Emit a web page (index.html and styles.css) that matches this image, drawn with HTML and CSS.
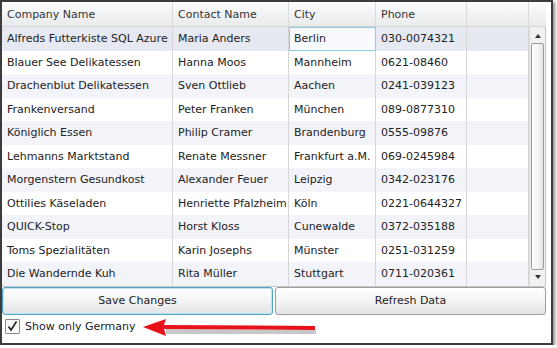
FILE: index.html
```html
<!DOCTYPE html>
<html>
<head>
<meta charset="utf-8">
<link rel="stylesheet" href="styles.css">
</head>
<body>
<div class="frame">
  <div class="grid">
    <div class="table">
      <div class="row head">
        <div class="cell">Company Name</div>
        <div class="cell">Contact Name</div>
        <div class="cell">City</div>
        <div class="cell">Phone</div>
        <div class="cell"></div>
      </div>
      <div class="row alt selected">
        <div class="cell">Alfreds Futterkiste SQL Azure</div>
        <div class="cell">Maria Anders</div>
        <div class="cell focus">Berlin</div>
        <div class="cell">030-0074321</div>
        <div class="cell"></div>
      </div>
      <div class="row">
        <div class="cell">Blauer See Delikatessen</div>
        <div class="cell">Hanna Moos</div>
        <div class="cell">Mannheim</div>
        <div class="cell">0621-08460</div>
        <div class="cell"></div>
      </div>
      <div class="row alt">
        <div class="cell">Drachenblut Delikatessen</div>
        <div class="cell">Sven Ottlieb</div>
        <div class="cell">Aachen</div>
        <div class="cell">0241-039123</div>
        <div class="cell"></div>
      </div>
      <div class="row">
        <div class="cell">Frankenversand</div>
        <div class="cell">Peter Franken</div>
        <div class="cell">München</div>
        <div class="cell">089-0877310</div>
        <div class="cell"></div>
      </div>
      <div class="row alt">
        <div class="cell">Königlich Essen</div>
        <div class="cell">Philip Cramer</div>
        <div class="cell">Brandenburg</div>
        <div class="cell">0555-09876</div>
        <div class="cell"></div>
      </div>
      <div class="row">
        <div class="cell">Lehmanns Marktstand</div>
        <div class="cell">Renate Messner</div>
        <div class="cell">Frankfurt a.M.</div>
        <div class="cell">069-0245984</div>
        <div class="cell"></div>
      </div>
      <div class="row alt">
        <div class="cell">Morgenstern Gesundkost</div>
        <div class="cell">Alexander Feuer</div>
        <div class="cell">Leipzig</div>
        <div class="cell">0342-023176</div>
        <div class="cell"></div>
      </div>
      <div class="row">
        <div class="cell">Ottilies Käseladen</div>
        <div class="cell">Henriette Pfalzheim</div>
        <div class="cell">Köln</div>
        <div class="cell">0221-0644327</div>
        <div class="cell"></div>
      </div>
      <div class="row alt">
        <div class="cell">QUICK-Stop</div>
        <div class="cell">Horst Kloss</div>
        <div class="cell">Cunewalde</div>
        <div class="cell">0372-035188</div>
        <div class="cell"></div>
      </div>
      <div class="row">
        <div class="cell">Toms Spezialitäten</div>
        <div class="cell">Karin Josephs</div>
        <div class="cell">Münster</div>
        <div class="cell">0251-031259</div>
        <div class="cell"></div>
      </div>
      <div class="row alt last">
        <div class="cell">Die Wandernde Kuh</div>
        <div class="cell">Rita Müller</div>
        <div class="cell">Stuttgart</div>
        <div class="cell">0711-020361</div>
        <div class="cell"></div>
      </div>
    </div>
    <div class="scroll">
      <div class="scroll-head"></div>
      <div class="scroll-track">
        <div class="arrow up"></div>
        <div class="thumb"></div>
        <div class="arrow down"></div>
      </div>
    </div>
  </div>
  <div class="buttons">
    <button class="btn focused">Save Changes</button>
    <button class="btn">Refresh Data</button>
  </div>
  <div class="check-row">
    <span class="checkbox">
      <svg width="13" height="13" viewBox="0 0 13 13"><path d="M2.5 6.5 L5 10 L10.5 1.5" fill="none" stroke="#222" stroke-width="1.6"/></svg>
    </span>
    <span class="check-label">Show only Germany</span>
    <svg class="red-arrow" width="180" height="24" viewBox="0 0 180 24">
      <g transform="translate(2,3)" opacity="0.3">
        <path d="M22 9 L172 10 L172 14 L22 14 Z" fill="#444"/>
      </g>
      <path d="M1 10 L24 2 L22 8 L173 9 L173 13 L22 12 L24 19 Z" fill="#e8121b"/>
    </svg>
  </div>
</div>
</body>
</html>
```
FILE: styles.css
```css
html, body {
  margin: 0;
  padding: 0;
  background: #ffffff;
}
body {
  font-family: "DejaVu Sans", Verdana, sans-serif;
  font-size: 11px;
  color: #222;
}
.frame {
  width: 549px;
  height: 341px;
  border: 2px solid #3c3c3c;
  background: #fff;
  box-shadow: 2px 2px 3px rgba(0,0,0,0.45);
}
.grid {
  display: flex;
  width: 544px;
  border-bottom: 1px solid #c8c8c8;
}
.table {
  width: 527px;
}
.row {
  display: grid;
  grid-template-columns: 171px 116px 87px 91px 62px;
  height: 23.5px;
  background: #fff;
}
.row.alt {
  background: #f2f4fa;
}
.row.selected {
  background: #e6e9f1;
}
.row.head {
  height: 25px;
  background: linear-gradient(#fdfdfd, #f1f2f4 55%, #e9eaec);
  border-bottom: 1px solid #d4d4d4;
  box-sizing: border-box;
}
.cell {
  display: flex;
  align-items: center;
  padding-left: 5px;
  border-right: 1px solid #d6d6d6;
  white-space: nowrap;
  overflow: hidden;
  box-sizing: border-box;
}
.head .cell {
  color: #333;
  border-right: 1px solid #dadada;
}
.cell.focus {
  border: 1px solid #8fcde3;
  background: #f7f9fc;
  padding-left: 4px;
}
.scroll {
  width: 17px;
  display: flex;
  flex-direction: column;
}
.scroll-head {
  height: 25px;
  background: linear-gradient(#fdfdfd, #f1f2f4 55%, #e9eaec);
  border-bottom: 1px solid #d4d4d4;
  box-sizing: border-box;
}
.scroll-track {
  flex: 1;
  display: flex;
  flex-direction: column;
  align-items: center;
  background: #f0f1f3;
  border-left: 1px solid #dcdcdc;
  border-right: 1px solid #c8c8c8;
  padding: 2px 0;
  box-sizing: border-box;
}
.arrow {
  width: 0;
  height: 0;
  border-left: 3px solid transparent;
  border-right: 3px solid transparent;
  margin: 5px 0;
}
.arrow.up {
  border-bottom: 4px solid #333;
}
.arrow.down {
  border-top: 4px solid #333;
}
.thumb {
  flex: 1;
  width: 13px;
  border: 1px solid #9a9a9a;
  border-radius: 2px;
  background: linear-gradient(90deg, #ffffff, #f3f3f3 60%, #e4e4e4);
  box-sizing: border-box;
}
.buttons {
  display: flex;
  gap: 2px;
  width: 544px;
  height: 28px;
}
.btn {
  flex: 1;
  font-family: "DejaVu Sans", Verdana, sans-serif;
  font-size: 11px;
  color: #222;
  border: 1px solid #9c9c9c;
  border-radius: 3px;
  background: linear-gradient(#ffffff, #f4f4f4 50%, #e3e4e6);
  padding: 0;
}
.btn.focused {
  border-color: #4aa6c4;
  box-shadow: inset 0 0 0 1px #bfe3ef;
}
.check-row {
  display: flex;
  align-items: center;
  height: 24px;
  padding-left: 3px;
}
.checkbox {
  display: flex;
  width: 13px;
  height: 13px;
  border: 1px solid #8a8a8a;
  border-radius: 1px;
  background: linear-gradient(#f4f4f4, #ffffff);
}
.check-label {
  margin-left: 5px;
}
.red-arrow {
  margin-left: 6px;
  margin-top: 4px;
}
```
